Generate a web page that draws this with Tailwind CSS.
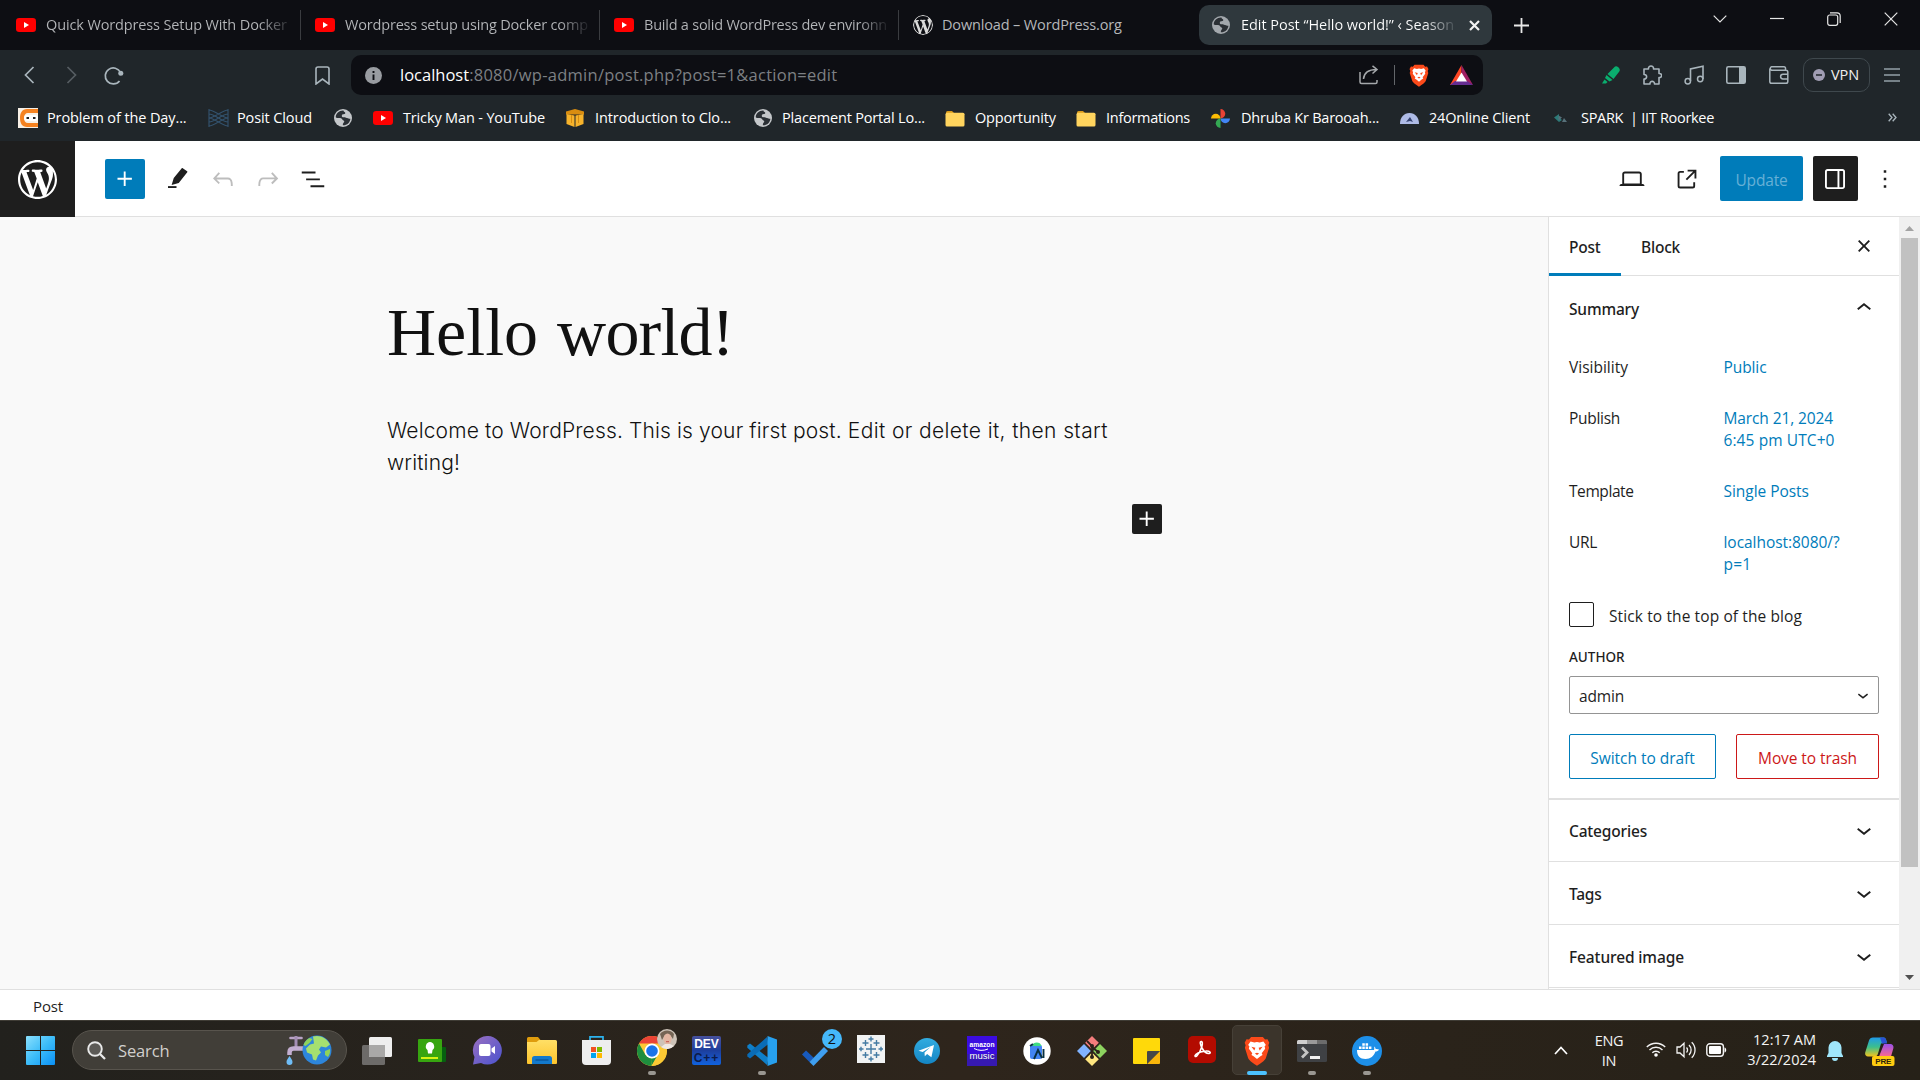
<!DOCTYPE html>
<html lang="en">
<head>
<meta charset="utf-8">
<title>Edit Post “Hello world!”</title>
<script src="https://cdn.jsdelivr.net/npm/@tailwindcss/browser@4"></script>
</head>
<body class="w-[1920px] h-[1080px] overflow-hidden bg-white font-['Open_Sans','Noto_Sans',sans-serif]">
<svg class="absolute h-0 w-0">
  <defs>
    <symbol id="yt" viewBox="0 0 20 14"><rect width="20" height="14" rx="3.2" fill="#f00"/><path d="M8 4v6l5-3z" fill="#fff"/></symbol>
    <symbol id="wp" viewBox="0 0 20 20"><path d="M20 10c0-5.51-4.49-10-10-10C4.48 0 0 4.49 0 10c0 5.52 4.48 10 10 10 5.51 0 10-4.48 10-10zM7.78 15.37L4.37 6.22c.55-.02 1.17-.08 1.17-.08.5-.06.44-1.13-.06-1.11 0 0-1.45.11-2.37.11-.18 0-.37 0-.58-.01C4.12 2.69 6.87 1.11 10 1.11c2.33 0 4.45.87 6.05 2.34-.68-.11-1.65.39-1.65 1.58 0 .74.45 1.36.9 2.1.35.61.55 1.36.55 2.46 0 1.49-1.4 5-1.4 5l-3.03-8.37c.54-.02.82-.17.82-.17.5-.05.44-1.25-.06-1.22 0 0-1.44.12-2.38.12-.87 0-2.33-.12-2.33-.12-.5-.03-.56 1.2-.06 1.22l.92.08 1.26 3.41zM17.41 10c.24-.64.74-1.87.43-4.25.7 1.29 1.05 2.71 1.05 4.25 0 3.29-1.73 6.24-4.4 7.78.97-2.59 1.94-5.2 2.92-7.78zM6.1 18.09C3.12 16.65 1.11 13.53 1.11 10c0-1.3.23-2.48.72-3.59C3.25 10.3 4.67 14.2 6.1 18.09zm4.03-6.63l2.58 6.98c-.86.29-1.76.45-2.71.45-.79 0-1.57-.11-2.29-.33.81-2.38 1.62-4.74 2.42-7.1z" fill="currentColor"/></symbol>
    <symbol id="globe" viewBox="0 0 18 18"><circle cx="9" cy="9" r="9" fill="currentColor"/><path d="M9.5 1.6C5 1.4 2 4.600 1.700 8.200c1.600 1.400 3.400.6 5.200 1 1.700.4 1.300 2 2.500 2.300 1 .3 1.100 1.100.3 2.100-.7.9-1 1.700-.8 2.700 4.200.100 7.200-3 7.500-6.600-1.300.5-2-.8-3.500-.7-1.200.1-1.700-.8-3-.7-1.500 0-2.300-.7-2.100-1.900.2-1.100 1.500-1.200 2.600-1.400 1.300-.2 1-1.600.2-2-.7-.4-1.200-.6-1.100-1.400z" fill="#2b3035"/></symbol>
    <symbol id="folder" viewBox="0 0 20 17"><path d="M1 2.500A1.500 1.500 0 0 1 2.500 1H7l2 2h9.500v5H1z" fill="#d99a1c"/><rect x=".5" y="2.800" width="19" height="13.700" rx="1.500" fill="#ffd45e"/></symbol>
    <symbol id="brave" viewBox="0 0 24 28"><path d="M6.500 1h11l2 2.300 2.300-.3 1.700 3.200-.9 2.400.7 2.400-3 9.500c-.7 2.400-6 5.700-8.300 7.300-2.300-1.600-7.600-4.900-8.300-7.300l-3-9.500.7-2.400L.5 6.200 2.200 3l2.300.3z" fill="#fb4a1a"/><path d="M12 5.500l2.500.5L18 5.200l2.300 3.300-1.200 1 .5 2.500-3.200 4 .8 1.800-2 1.200L12 21.500 8.800 19l-2-1.200.8-1.800-3.200-4 .5-2.500-1.200-1L6 5.200l3.500.8z" fill="#fff"/><path d="M6.800 10l3.700 1-1 2.600zM17.200 10l-3.700 1 1 2.600zM10 16.300l2 1.500 2-1.500-2-.7z" fill="#fb4a1a"/></symbol>
    <symbol id="down" viewBox="0 0 24 24"><path d="M17.500 11.600L12 16l-5.500-4.400.9-1.200L12 14l4.500-3.600 1 1.200z" fill="currentColor"/></symbol>
    <symbol id="plus" viewBox="0 0 24 24"><path d="M11 12.500V17.500H12.500V12.500H17.500V11H12.500V6H11V11H6V12.500H11Z" fill="currentColor"/></symbol>
    <linearGradient id="gwin" x1="0" y1="0" x2="1" y2="1"><stop stop-color="#8be0fd"/><stop offset=".5" stop-color="#3cbcf9"/><stop offset="1" stop-color="#0a90f5"/></linearGradient>
    <linearGradient id="gcop" x1="0" y1="0" x2="0" y2="1"><stop stop-color="#1f9bea"/><stop offset=".5" stop-color="#3cbf8c"/><stop offset="1" stop-color="#f4c51c"/></linearGradient>
    <linearGradient id="gcop2" x1="0" y1="0" x2="0" y2="1"><stop stop-color="#9a50e8"/><stop offset="1" stop-color="#fb6a8c"/></linearGradient>
    <linearGradient id="gchat" x1="0" y1="0" x2="1" y2="1"><stop stop-color="#9a6fc0"/><stop offset="1" stop-color="#4a53cf"/></linearGradient>
    <linearGradient id="gfold" x1="0" y1="0" x2="0" y2="1"><stop stop-color="#ffdf66"/><stop offset="1" stop-color="#fdc42c"/></linearGradient>
    <linearGradient id="gtel" x1="0" y1="0" x2="0" y2="1"><stop stop-color="#32ace0"/><stop offset="1" stop-color="#1485c4"/></linearGradient>
  </defs>
</svg>

<!-- tab strip -->
<div class="flex h-[50px] bg-[#0d0e13] text-[14.5px] leading-[50px] text-[#b5b7ba] whitespace-nowrap">
  <div class="flex w-[301px] shrink-0 items-center pl-4"><svg class="w-5 h-3.5 shrink-0"><use href="#yt"/></svg><span class="ml-2.5 w-[242px] overflow-hidden tracking-[-0.13px] bg-linear-to-r from-[#b5b7ba] from-88% to-[#303136] bg-clip-text text-transparent">Quick Wordpress Setup With Docker</span><i class="ml-auto w-px h-[30px] bg-[#3a3c40]"></i></div>
  <div class="flex w-[299px] shrink-0 items-center pl-3.5"><svg class="w-5 h-3.5 shrink-0"><use href="#yt"/></svg><span class="ml-2.5 w-[244px] overflow-hidden tracking-[-0.18px] bg-linear-to-r from-[#b5b7ba] from-88% to-[#1c1d22] bg-clip-text text-transparent">Wordpress setup using Docker comp</span><i class="ml-auto w-px h-[30px] bg-[#3a3c40]"></i></div>
  <div class="flex w-[299px] shrink-0 items-center pl-3.5"><svg class="w-5 h-3.5 shrink-0"><use href="#yt"/></svg><span class="ml-2.5 w-[244px] overflow-hidden tracking-[-0.23px] bg-linear-to-r from-[#b5b7ba] from-88% to-[#1c1d22] bg-clip-text text-transparent">Build a solid WordPress dev environn</span><i class="ml-auto w-px h-[30px] bg-[#3a3c40]"></i></div>
  <div class="flex w-[300px] shrink-0 items-center pl-3.5"><svg class="w-5 h-5 shrink-0 text-[#dadada] rounded-full"><use href="#wp"/></svg><span class="ml-[9px] tracking-[-0.15px]">Download – WordPress.org</span></div>
  <div class="mt-[5px] flex h-10 w-[293px] shrink-0 items-center rounded-[10px] bg-[#2f383d] pl-[13px] leading-10 text-white"><svg class="w-[18px] h-[18px] shrink-0 text-[#a3a8ad]"><use href="#globe"/></svg><span class="ml-[11px] w-[213px] overflow-hidden tracking-[-0.04px] bg-linear-to-r from-white from-86% to-[#4a5358] bg-clip-text text-transparent">Edit Post “Hello world!” ‹ Season</span><svg class="ml-[15px] w-[11px] h-[11px]" viewBox="0 0 11 11"><path d="M1 1l9 9M10 1l-9 9" stroke="#f2f2f2" stroke-width="2.200"/></svg></div>
  <svg class="ml-[22px] mt-[17.5px] w-[15px] h-[15px]" viewBox="0 0 15 15"><path d="M7.500 0v15M0 7.500h15" stroke="#e8e8e8" stroke-width="1.800"/></svg>
  <div class="ml-auto mr-[22px] flex h-[38px] items-center text-[#e6e6e6]">
    <svg class="w-3.5 h-2" viewBox="0 0 14 8"><path d="M.7.7L7 7 13.300.7" fill="none" stroke="currentColor" stroke-width="1.200"/></svg>
    <svg class="ml-[43px] w-3.5 h-2" viewBox="0 0 14 8"><path d="M0 3.500h14" stroke="currentColor" stroke-width="1.200"/></svg>
    <svg class="ml-[43px] w-3.5 h-3.5" viewBox="0 0 14 14"><rect x=".7" y="3" width="10" height="10.300" rx="2" fill="none" stroke="currentColor" stroke-width="1.200"/><path d="M3 .8h7A3.200 3.200 0 0 1 13.200 4v7" fill="none" stroke="currentColor" stroke-width="1.200"/></svg>
    <svg class="ml-[43px] w-3.5 h-3.5" viewBox="0 0 14 14"><path d="M.7.7l12.600 12.600M13.300.7L.7 13.300" stroke="currentColor" stroke-width="1.200"/></svg>
  </div>
</div>

<!-- address row -->
<div class="flex h-[50px] items-center bg-[#20262a] text-[#a9b5bc]">
  <svg class="ml-6 w-[11px] h-[18px]" viewBox="0 0 11 18"><path d="M9.500 1L1.500 9l8 8" fill="none" stroke="currentColor" stroke-width="1.700"/></svg>
  <svg class="ml-[31px] w-[11px] h-[18px]" viewBox="0 0 11 18"><path d="M1.500 1l8 8-8 8" fill="none" stroke="#565d62" stroke-width="1.700"/></svg>
  <svg class="ml-[27px] w-5 h-[19px]" viewBox="0 0 20 19"><path d="M16.500 6.500A8 8 0 1 0 15.500 15" fill="none" stroke="currentColor" stroke-width="1.700"/><circle cx="16.800" cy="7.300" r="2.500" fill="currentColor"/></svg>
  <svg class="ml-[191px] w-[15px] h-[19px]" viewBox="0 0 15 19"><path d="M3 1h9a2 2 0 0 1 2 2v15l-6.500-5L1 18V3a2 2 0 0 1 2-2z" fill="none" stroke="currentColor" stroke-width="1.600"/></svg>
  <div class="ml-[21px] flex h-10 w-[1132px] items-center rounded-[10px] bg-[#0d0e13] pl-3.5 text-[16.5px]">
    <svg class="w-[17px] h-[17px]" viewBox="0 0 17 17"><circle cx="8.500" cy="8.500" r="8.500" fill="#999ca1"/><path d="M8.500 7.500v5.500M8.500 4v2" stroke="#0d0e13" stroke-width="1.900"/></svg>
    <span class="ml-[18px] leading-5 tracking-[0.26px] text-[#7d8084]"><b class="font-normal tracking-normal text-white">localhost</b>:8080/wp-admin/post.php?post=1&amp;action=edit</span>
    <svg class="ml-auto w-5 h-5" viewBox="0 0 20 20"><path d="M1 7v10a1.500 1.500 0 0 0 1.500 1.500h14A1.500 1.500 0 0 0 18 17v-2M4.500 14c.5-6 4.500-9.500 13-9.500M13.500.8l4.500 3.700-4.500 4" fill="none" stroke="#a5a8ab" stroke-width="1.500"/></svg>
    <i class="ml-[15px] w-px h-5 bg-[#63666a]"></i>
    <svg class="ml-3.5 w-5 h-[23px]"><use href="#brave"/></svg>
    <svg class="ml-[21px] mr-2.5 w-[23px] h-5" viewBox="0 0 23 20"><path d="M11.500 0L0 20h5l6.500-11z" fill="#ff4724"/><path d="M11.500 0L23 20l-6-3-5.500-8z" fill="#9e1f63"/><path d="M0 20h23l-6-4H5z" fill="#662d91"/><path d="M11.500 7.500L17 16.500H6z" fill="#fff"/></svg>
  </div>
  <div class="ml-auto mr-5 flex items-center">
    <svg class="w-[19px] h-[18px]" viewBox="0 0 19 18"><path d="M12 1.500a3 3 0 0 1 4-.5l1 1a3 3 0 0 1 .3 3.500L11.500 13 5.500 8z" fill="#0aad6e"/><path d="M4.500 9l6 5-3 1.500-4.500-3.500z" fill="#0aad6e"/><path d="M2.500 13.500L5.500 16 4 17.500H0z" fill="#0aad6e"/></svg>
    <svg class="ml-[21px] w-5 h-5" viewBox="0 0 20 20"><path d="M2 4h4.500c-.6-4 5.600-4 5 0H17v4.500c4-.3 3 4.500 0 4V19h-4.500c.3-3.500-5-3.500-4.500 0H2v-5c3.500.2 3.500-4.700 0-4.500z" fill="none" stroke="currentColor" stroke-width="1.600" stroke-linejoin="round"/></svg>
    <svg class="ml-[22px] w-5 h-5" viewBox="0 0 20 20"><path d="M6.500 16V4L19 1.200V14" fill="none" stroke="currentColor" stroke-width="1.600"/><circle cx="3.800" cy="16.300" r="2.700" fill="none" stroke="currentColor" stroke-width="1.500"/><circle cx="16.200" cy="14" r="2.700" fill="none" stroke="currentColor" stroke-width="1.500"/></svg>
    <svg class="ml-[22px] w-5 h-[18px]" viewBox="0 0 20 18"><rect x=".8" y=".8" width="18.400" height="16.400" rx="1.500" fill="none" stroke="currentColor" stroke-width="1.600"/><path d="M13 1h6v16h-6z" fill="currentColor"/></svg>
    <svg class="ml-[23px] w-5 h-[18px]" viewBox="0 0 20 18"><path d="M16.500 4V2.500a1.500 1.500 0 0 0-1.500-1.700H2.500a1.800 1.800 0 0 0 0 3.400H17a1.800 1.800 0 0 1 1.800 1.800v9.400a1.800 1.800 0 0 1-1.800 1.800H2.600A1.800 1.800 0 0 1 .8 15.400V2.500M19 8.200h-5a2.400 2.400 0 0 0 0 4.800h5" fill="none" stroke="currentColor" stroke-width="1.500"/></svg>
    <div class="ml-3.5 flex h-[34px] w-[67px] items-center rounded-[10px] border border-[#3f484d] pl-[9px] text-[14.5px] text-[#f0f0f0]"><svg class="w-3 h-3 mr-[6px]" viewBox="0 0 12 12"><circle cx="6" cy="6" r="6" fill="#a19db3"/><path d="M3 6h6" stroke="#20262a" stroke-width="1.500"/></svg><span class="tracking-[-0.09px]">VPN</span></div>
    <svg class="ml-3.5 w-4 h-3.5" viewBox="0 0 16 14"><path d="M0 1h16M0 7h16M0 13h16" stroke="#93a0a8" stroke-width="1.400"/></svg>
  </div>
</div>

<!-- bookmarks -->
<div class="flex h-[41px] bg-[#20262a] text-[14.5px] leading-[34px] text-white whitespace-nowrap">
  <div class="ml-[18px] flex h-9 w-[190px] items-center"><svg class="w-5 h-5 mr-[9px] shrink-0" viewBox="0 0 20 20"><path d="M0 0h20v20H0z" fill="#f7f0e6"/><path d="M20 1H9C4 1 2 5 2 10s2 9 7 9h11v-4H10c-2.500 0-4-2-4-5s1.500-5 4-5h10z" fill="#f58220"/><rect x="6" y="7" width="14" height="6" rx="3" fill="#fff"/><path d="M8.500 10h2.500M15 10h2.500" stroke="#222" stroke-width="1.800"/></svg><span class="tracking-[-0.11px]">Problem of the Day...</span></div>
  <div class="flex h-9 w-[126px] items-center"><svg class="w-[21px] h-[18px] mr-2 shrink-0" viewBox="0 0 21 18"><path d="M1 0v18M20 0v18M1 1c5 0 14 8 19 8M1 9c5 0 14 8 19 8M20 1C15 1 6 9 1 9M20 9C15 9 6 17 1 17M1 5c6 0 13 8 19 8M20 5C14 5 7 13 1 13" fill="none" stroke="#33536f" stroke-width="1.100"/></svg><span class="tracking-[-0.11px]">Posit Cloud</span></div>
  <div class="flex h-9 w-[39px] items-center"><svg class="w-[18px] h-[18px] text-[#c4c7ca]"><use href="#globe"/></svg></div>
  <div class="flex h-9 w-[193px] items-center"><svg class="w-5 h-3.5 mr-2.5 shrink-0"><use href="#yt"/></svg><span class="tracking-[-0.15px]">Tricky Man - YouTube</span></div>
  <div class="flex h-9 w-[188px] items-center"><svg class="w-[18px] h-[18px] mr-[11px] shrink-0" viewBox="0 0 18 18"><path d="M9 0l9 2.500v3H0v-3z" fill="#d98d10"/><path d="M.5 5l8 1.500V18l-8-3zM17.500 5l-8 1.500V18l8-3z" fill="#f7b32b"/><path d="M5.500 6v8M12.500 6v8" stroke="#d98d10"/></svg><span class="tracking-[-0.1px]">Introduction to Clo...</span></div>
  <div class="flex h-9 w-[191px] items-center"><svg class="w-[18px] h-[18px] mr-[10px] shrink-0 text-[#c4c7ca]"><use href="#globe"/></svg><span class="tracking-[-0.17px]">Placement Portal Lo...</span></div>
  <div class="flex h-9 w-[131px] items-center"><svg class="w-5 h-[17px] mr-2.5 shrink-0"><use href="#folder"/></svg><span class="tracking-[-0.16px]">Opportunity</span></div>
  <div class="flex h-9 w-[135px] items-center"><svg class="w-5 h-[17px] mr-2.5 shrink-0"><use href="#folder"/></svg><span class="tracking-[-0.28px]">Informations</span></div>
  <div class="flex h-9 w-[189px] items-center"><svg class="w-[19px] h-[19px] mr-[11px] shrink-0" viewBox="0 0 20 20"><path d="M10 0a5 5 0 0 1 0 10z" fill="#ea4335"/><path d="M20 10a5 5 0 0 1-10 0z" fill="#4285f4"/><path d="M10 20a5 5 0 0 1 0-10z" fill="#34a853"/><path d="M0 10a5 5 0 0 1 10 0z" fill="#fbbc04"/></svg><span class="tracking-[-0.23px]">Dhruba Kr Barooah...</span></div>
  <div class="flex h-9 w-[154px] items-center"><svg class="w-[19px] h-[11px] mr-2.5 shrink-0" viewBox="0 0 19 11"><path d="M0 11C0 4 4 0 9.500 0S19 4 19 11z" fill="#aebbe6"/><path d="M6 9l4-5 1.500 2.500L13 9l-3-1z" fill="#33406e"/></svg><span class="tracking-[-0.17px]">24Online Client</span></div>
  <div class="flex h-9 w-40 items-center"><svg class="w-[13px] h-2.5 mr-3.5 shrink-0" viewBox="0 0 13 10"><path d="M5 1L0 4.500 5 9l3-2-3-2.500z" fill="#2c7a78"/><path d="M4.500 2.500l3.500 2-3.500 3M8 9l2-4 3 4z" fill="#57707a"/></svg><span class="tracking-[-0.3px]">SPARK&nbsp; | IIT Roorkee</span></div>
  <svg class="ml-auto mr-[23px] mt-[13px] w-[9px] h-[9px]" viewBox="0 0 9 9"><path d="M.7.7L4 4.500.7 8.300M4.700.7L8 4.500 4.700 8.300" fill="none" stroke="#a9b5bc" stroke-width="1.300"/></svg>
</div>

<!-- editor header -->
<header class="flex h-[76px] items-center border-b border-[#e0e0e0] bg-white text-[#1e1e1e]">
  <div class="-mb-px flex h-[76px] w-[75px] items-center justify-center bg-[#1e1e1e]"><svg class="w-[39px] h-[39px] text-white"><use href="#wp"/></svg></div>
  <div class="ml-[30px] flex h-10 w-10 items-center justify-center rounded-[2px] bg-[#007cba] text-white"><svg class="w-[30px] h-[30px]"><use href="#plus"/></svg></div>
  <svg class="ml-[18px] w-[30px] h-[30px]" viewBox="0 0 24 24"><path d="M15.800 3.300l3.500 2.400c.3.200.3.500.1.800l-6.800 8.600-5.700 1.700 1.700-5.600 6.400-7.800c.2-.3.500-.3.800-.1z" fill="currentColor"/><path d="M4 17.700h6.800v1.500H4z" fill="currentColor"/></svg>
  <svg class="ml-[15px] w-[30px] h-[30px] text-[#bdbdbd]" viewBox="0 0 24 24"><path d="M18.300 11.700c-.6-.6-1.400-.9-2.300-.9H6.700l2.900-3.300-1.100-1-4.500 5L8.500 16l1-1-2.700-2.700H16c.5 0 .9.2 1.300.5 1 1 1 3.400 1 4.500v.3h1.500v-.2c0-1.500 0-4.300-1.500-5.700z" fill="currentColor"/></svg>
  <svg class="ml-[15px] w-[30px] h-[30px] text-[#bdbdbd]" viewBox="0 0 24 24"><path d="M15.600 6.500l-1.100 1 2.900 3.300H8c-.9 0-1.700.3-2.300.9-1.400 1.500-1.400 4.200-1.400 5.600v.2h1.500v-.3c0-1.100 0-3.500 1-4.500.3-.3.700-.5 1.300-.5h9.200L14.500 15l1.100 1.100 4.600-4.600-4.600-5z" fill="currentColor"/></svg>
  <svg class="ml-[15px] w-[30px] h-[30px]" viewBox="0 0 24 24"><path d="M3 6h11v1.500H3V6Zm3.500 5.500h11V13h-11v-1.500ZM21 17H10v1.500h11V17Z" fill="currentColor"/></svg>
  <div class="ml-auto mr-5 flex items-center">
    <svg class="w-[30px] h-[30px]" viewBox="0 0 24 24"><path d="M20.500 16h-.7V8c0-1.100-.9-2-2-2H6.200c-1.100 0-2 .9-2 2v8h-.7c-.8 0-1.500.7-1.500 1.500h20c0-.8-.7-1.500-1.500-1.500zM5.700 8c0-.3.2-.5.5-.5h11.600c.3 0 .5.2.5.500v7.600H5.700V8z" fill="currentColor"/></svg>
    <svg class="ml-[25px] w-[30px] h-[30px]" viewBox="0 0 24 24"><path d="M19.500 4.500h-7V6h4.440l-5.970 5.970 1.060 1.060L18 7.060v4.440h1.500v-7Zm-13 1a2 2 0 0 0-2 2v10a2 2 0 0 0 2 2h10a2 2 0 0 0 2-2v-3H17v3a.5.5 0 0 1-.5.5h-10a.5.5 0 0 1-.5-.5v-10a.5.5 0 0 1 .5-.5h3V5.500h-3Z" fill="currentColor"/></svg>
    <div class="ml-[18px] flex h-[45px] w-[83px] items-center justify-center rounded-[2px] bg-[#007cba] pt-1 text-[15.5px] tracking-[-0.18px] text-[#66b0d6]">Update</div>
    <div class="ml-2.5 flex h-[45px] w-[45px] items-center justify-center rounded-[2px] bg-[#1e1e1e] text-white"><svg class="-ml-px w-[30px] h-[30px]" viewBox="0 0 24 24"><path d="M18 4H6c-1.100 0-2 .9-2 2v12c0 1.100.9 2 2 2h12c1.100 0 2-.9 2-2V6c0-1.100-.9-2-2-2zm-4 14.500H6c-.3 0-.5-.2-.5-.5V6c0-.3.2-.5.5-.5h8v13zm4.500-.5c0 .3-.2.5-.5.5h-2.500v-13H18c.3 0 .5.2.5.500v12z" fill="currentColor"/></svg></div>
    <svg class="ml-3 w-[30px] h-[30px]" viewBox="0 0 24 24"><path d="M13 19h-2v-2h2v2zm0-6h-2v-2h2v2zm0-6h-2V5h2v2z" fill="currentColor"/></svg>
  </div>
</header>

<!-- canvas and settings sidebar -->
<main class="flex h-[772px]">
  <section class="flex w-[1548px] flex-col bg-[#f9f9f9] pl-[387px] text-[#111]">
    <h1 class="mt-[74px] h-[82px] font-['Liberation_Serif',serif] text-[68px] leading-[82px] whitespace-nowrap"><span class="mr-0.5">Hello</span> <span class="tracking-[-0.8px]">world!</span></h1>
    <p class="mt-[42px] w-[775px] font-['Inter',sans-serif] text-[21px] font-light leading-8 tracking-[0.14px]">Welcome to WordPress. This is your first post. <span class="tracking-[0.38px]">Edit or delete it, then start</span><br>writing!</p>
    <div class="mt-[25px] flex h-[30px] w-[775px] justify-end"><span class="flex h-[30px] w-[30px] items-center justify-center rounded-[2px] bg-[#1e1e1e] text-white"><svg class="w-[30px] h-[30px]"><use href="#plus"/></svg></span></div>
  </section>
  <aside class="h-[772px] w-[351px] overflow-hidden border-l border-[#e0e0e0] bg-white text-[15.5px] leading-[22px] text-[#1e1e1e]">
    <div class="flex h-[59px] items-center border-b border-[#e0e0e0] font-['Noto_Sans'] font-medium">
      <div class="-mb-px flex h-[59px] w-[72px] items-center border-b-3 border-[#007cba] pl-5 pt-[4px] tracking-[-0.2px]">Post</div>
      <div class="pl-5 pt-0.5 tracking-[-0.2px]">Block</div>
      <svg class="ml-auto mr-5 w-[30px] h-[30px]" viewBox="0 0 24 24"><path d="M12 13.060l3.712 3.713 1.061-1.060L13.061 12l3.712-3.712-1.060-1.060L12 10.938 8.288 7.227l-1.061 1.060L10.939 12l-3.712 3.712 1.060 1.061L12 13.061z" fill="currentColor"/></svg>
    </div>
    <div class="h-[524px] border-b-2 border-[#e0e0e0] px-5">
      <div class="flex h-[63px] items-center justify-between font-['Noto_Sans'] font-medium tracking-[-0.17px]"><span class="mt-0.5">Summary</span><svg class="w-[30px] h-[30px]" viewBox="0 0 24 24"><path d="M6.500 12.400L12 8l5.500 4.400-.9 1.200L12 10l-4.500 3.600-1-1.200z" fill="currentColor"/></svg></div>
      <div class="mt-[17px] grid grid-cols-[154.500px_1fr] gap-y-[29px]">
        <span>Visibility</span><span class="tracking-[-0.09px] text-[#007cba]">Public</span>
        <span class="tracking-[-0.29px]">Publish</span><span class="tracking-[-0.11px] text-[#007cba]">March 21, 2024<br><span class="tracking-[0.09px]">6:45 pm UTC+0</span></span>
        <span class="tracking-[-0.42px]">Template</span><span class="tracking-[-0.04px] text-[#007cba]">Single Posts</span>
        <span class="tracking-[-0.32px]">URL</span><span class="tracking-[-0.05px] text-[#007cba]">localhost:8080/?<br><span class="tracking-[0.26px]">p=1</span></span>
      </div>
      <div class="mt-[27px] flex h-[25px] items-center"><i class="h-[25px] w-[25px] rounded-[2px] border border-[#1e1e1e]"></i><span class="ml-[15px] mt-0.5 tracking-[0.11px]">Stick to the top of the blog</span></div>
      <div class="mt-[19px] h-[22px] font-['Noto_Sans'] text-[13.5px] font-medium">AUTHOR</div>
      <div class="mt-2 flex h-[38px] items-center justify-between rounded-[2px] border border-[#949494] pl-[9px] pr-[4px]"><span class="mt-0.5 tracking-[-0.17px]">admin</span><svg class="w-[22px] h-[22px]"><use href="#down"/></svg></div>
      <div class="mt-5 flex justify-between">
        <div class="flex h-[45px] w-[147px] items-center justify-center rounded-[2px] border border-[#007cba] pt-0.5 tracking-[-0.03px] text-[#007cba]">Switch to draft</div>
        <div class="flex h-[45px] w-[143px] items-center justify-center rounded-[2px] border border-[#cc1818] pt-0.5 tracking-[-0.08px] text-[#cc1818]">Move to trash</div>
      </div>
    </div>
    <div class="flex h-[62px] items-center justify-between border-b border-[#e0e0e0] px-5 font-['Noto_Sans'] font-medium tracking-[-0.18px]">Categories<svg class="-mt-px w-[30px] h-[30px]"><use href="#down"/></svg></div>
    <div class="flex h-[63px] items-center justify-between border-b border-[#e0e0e0] px-5 font-['Noto_Sans'] font-medium tracking-[-0.25px]"><span class="mt-0.5">Tags</span><svg class="w-[30px] h-[30px]"><use href="#down"/></svg></div>
    <div class="flex h-[63px] items-center justify-between border-b border-[#e0e0e0] px-5 font-['Noto_Sans'] font-medium tracking-[-0.12px]"><span class="mt-0.5">Featured image</span><svg class="w-[30px] h-[30px]"><use href="#down"/></svg></div>
  </aside>
  <div class="flex w-[21px] flex-col items-center bg-[#f0f0f0]">
    <svg class="mt-[9px] w-[9px] h-[5px]" viewBox="0 0 9 5"><path d="M4.500 0L9 5H0z" fill="#a3a3a3"/></svg>
    <i class="mt-[7px] h-[629px] w-[17px] bg-[#c1c1c1]"></i>
    <svg class="mt-auto mb-[9px] w-[9px] h-[5px]" viewBox="0 0 9 5"><path d="M4.500 5L9 0H0z" fill="#505050"/></svg>
  </div>
</main>
<footer class="flex h-[31px] items-center border-t border-[#e0e0e0] bg-white pl-[33px] pt-0.5 text-[15px] tracking-[-0.14px] text-[#1e1e1e]">Post</footer>

<!-- taskbar -->
<div class="flex h-[60px] border-t border-[#3f3c35] bg-linear-to-r from-[#22211d] via-[#2e251c] to-[#262118] text-[#f3f3f3]">
  <svg class="ml-[26px] mt-[15px] w-[29px] h-[29px] shrink-0" viewBox="0 0 29 29"><path d="M0 1a1 1 0 0 1 1-1h13v14H0zM15 0h13a1 1 0 0 1 1 1v13H15zM0 15h14v14H1a1 1 0 0 1-1-1zM15 15h14v13a1 1 0 0 1-1 1H15z" fill="url(#gwin)"/></svg>
  <div class="ml-[17px] mt-[9px] flex h-10 w-[275px] shrink-0 items-center rounded-full border border-[#58544d] bg-[#413e38] pl-3.5">
    <svg class="w-[19px] h-[19px]" viewBox="0 0 19 19"><circle cx="8" cy="8" r="6.800" fill="#5c5a56" stroke="#e9e9e9" stroke-width="1.900"/><path d="M13 13l5 5" stroke="#e9e9e9" stroke-width="2.300"/></svg>
    <span class="ml-3 mt-0.5 text-[16.5px] tracking-[-0.12px] text-[#d2d0cd]">Search</span>
    <svg class="ml-auto mr-3.5 w-[46px] h-[30px]" viewBox="0 0 46 30"><path d="M4.500 3h11" stroke="#b9a3c6" stroke-width="2.600" stroke-linecap="round"/><path d="M10 1v13" stroke="#a58fb4" stroke-width="3"/><path d="M3.500 20v-2.500c0-3 1.500-4 4-4H19" fill="none" stroke="#c3aed0" stroke-width="4.500"/><path d="M3.500 21c1.500 2.500 3 4 3 6a3 3 0 0 1-6 0c0-2 1.500-3.500 3-6z" fill="#6fbdf6"/><circle cx="31" cy="15" r="14.500" fill="#2d86dc"/><path d="M27 1.500c6-2 14 1 17 8l-4 3-5-1-2 3 2 3-3 3-2 5-3-1-1-5-5-2-1-4 4-4 4-1z" fill="#a5e070"/><path d="M17.500 10c1-3 3-5.500 6-7l3 1-3 4-4 3zM39 16l5-2c.5 3-.5 6-2 8l-3-2z" fill="#8fd35a"/></svg>
  </div>
  <div class="ml-[2px] flex shrink-0">
    <div class="relative flex w-[55px] items-center justify-center"><svg class="w-[30px] h-[28px]" viewBox="0 0 30 28"><rect y="8" width="23" height="20" rx="1.500" fill="#6d6b69"/><rect x="7" width="23" height="20" rx="1.500" fill="#eee"/><path d="M7 8h16v12H8.500A1.500 1.500 0 0 1 7 18.500z" fill="#a9a8a7"/></svg></div>
    <div class="relative flex w-[55px] items-center justify-center"><svg class="w-[28px] h-[23px]" viewBox="0 0 28 23"><rect x="20" y="8" width="8" height="15" rx="1" fill="#06600f"/><rect width="24" height="23" rx="1" fill="#37a510"/><path d="M12 3a4.500 4.500 0 0 1 2.500 8l-.5 3.500h-4L9.500 11A4.500 4.500 0 0 1 12 3z" fill="#fff"/><path d="M3 19h17" stroke="#d4f312" stroke-width="2"/></svg></div>
    <div class="relative flex w-[55px] items-center justify-center"><svg class="w-[30px] h-[29px]" viewBox="0 0 30 29"><path d="M15 0a14.300 14.300 0 1 1-6 27L1 28.500 2.500 21A14.300 14.300 0 0 1 15 0z" fill="url(#gchat)"/><rect x="7" y="8" width="11.500" height="12" rx="2" fill="#fff"/><path d="M19.500 12.500l3.500-2.500v8l-3.500-2.500z" fill="#fff"/></svg></div>
    <div class="relative flex w-[55px] items-center justify-center"><svg class="w-[30px] h-[27px]" viewBox="0 0 30 27"><path d="M0 1.500A1.500 1.500 0 0 1 1.500 0H11l2.500 3H28v6H0z" fill="#df9c0d"/><path d="M0 5h9.500L12 3h16.500A1.500 1.500 0 0 1 30 4.500V26a1 1 0 0 1-1 1H1a1 1 0 0 1-1-1z" fill="url(#gfold)"/><path d="M5 27v-5.500A2.500 2.500 0 0 1 7.500 19h15a2.500 2.500 0 0 1 2.500 2.500V27z" fill="#1379cc"/><path d="M8.500 23h13" stroke="#0a4f94" stroke-width="1.200"/></svg></div>
    <div class="relative flex w-[55px] items-center justify-center"><svg class="w-[29px] h-[29px]" viewBox="0 0 29 29"><path d="M8 6V.8h13V6" fill="none" stroke="#2cb3ee" stroke-width="1.700"/><path d="M0 4h29v21a4 4 0 0 1-4 4H4a4 4 0 0 1-4-4z" fill="#eee"/><path d="M9 11h5v5H9z" fill="#f25022"/><path d="M15 11h5v5h-5z" fill="#7fba00"/><path d="M9 17h5v5H9z" fill="#00a4ef"/><path d="M15 17h5v5h-5z" fill="#ffb900"/></svg></div>
    <div class="relative flex w-[55px] items-center justify-center"><svg class="w-[30px] h-[30px]" viewBox="0 0 30 30"><circle cx="15" cy="15" r="15" fill="#fcc934"/><path d="M2 7.500A15 15 0 0 1 28 7.500H15z" fill="#ea4335"/><path d="M2 7.500L8.500 19 15 22.500 14.500 30A15 15 0 0 1 2 7.500z" fill="#1e8e3e"/><path d="M14.500 30l7-12.500L15 15 8.500 19 15 22z" fill="#1e8e3e"/><path d="M14.500 30l7-11.500L22 9h6.500A15 15 0 0 1 14.500 30z" fill="#fcc934"/><circle cx="15" cy="15" r="7.500" fill="#fff"/><circle cx="15" cy="15" r="5.800" fill="#1a73e8"/></svg>
      <svg class="absolute left-[33px] top-2 w-5 h-5" viewBox="0 0 20 20"><circle cx="10" cy="10" r="10" fill="#cdc3b8"/><path d="M3 5c3-4 10-5 14 0l-1 5-3-4H8l-3 5z" fill="#756555"/><ellipse cx="10.500" cy="10" rx="4" ry="5.500" fill="#e3b6a2"/><path d="M4 18l4-3h5l4 2a10 10 0 0 1-13 1z" fill="#efe9e4"/><path d="M9 12.700h3" stroke="#c6504a"/></svg>
      <i class="absolute bottom-[5px] left-6 h-1 w-2 rounded-full bg-[#9a9791]"></i></div>
    <div class="relative flex w-[55px] items-center justify-center"><div class="flex h-[29px] w-[29px] flex-col items-center rounded-[2px] bg-linear-to-b from-[#46509c] via-[#1c3f9e] to-[#0e63df] pt-px font-['Liberation_Sans'] text-[12px] font-bold leading-[14px]"><span class="text-white">DEV</span><span class="tracking-[1px] text-[#0b1b4a]">C++</span></div></div>
    <div class="relative flex w-[55px] items-center justify-center"><svg class="w-[30px] h-[30px]" viewBox="0 0 30 30"><path d="M21.500 22L3 7.500.3 9.500v2.200L20 29z" fill="#0f7fc9"/><path d="M21.500 8L3 22.500.3 20.500v-2.200L20 1z" fill="#0a6cb6"/><path d="M20.500 0L30 3.500v23L20.500 30z" fill="#27a0ee"/></svg><i class="absolute bottom-[5px] left-6 h-1 w-2 rounded-full bg-[#9a9791]"></i></div>
    <div class="relative flex w-[55px] items-center justify-center"><svg class="mt-2 -ml-1 w-[26px] h-[22px]" viewBox="0 0 26 22"><path d="M0 10.500l4-4 8 7.500-4.500 4z" fill="#185abd"/><path d="M7.500 18L22 3l4 4-14.500 15z" fill="#3f9ff0"/></svg>
      <span class="absolute left-[33px] top-2 flex h-5 w-5 items-center justify-center rounded-full bg-[#45b8fb] text-[14.5px] leading-none text-[#111]">2</span></div>
    <div class="relative flex w-[55px] items-center justify-center"><svg class="-mt-1 -ml-px w-[28px] h-[28px]" viewBox="0 0 28 28"><path d="M0 0h28v28H0z" fill="#f1f3f4"/><path d="M14 9v10M9 14h10M14 1.500v5M11.500 4h5M14 21.500v5M11.500 24h5M2 14h4.500M4 11.800v4.400M21.500 14H26M24 11.800v4.400M8.500 5v6M5.500 8h6M19.500 5v6M16.500 8h6M8.500 17v6M5.500 20h6M19.500 17v6M16.500 20h6" stroke="#447ba3" stroke-width="1.400"/></svg></div>
    <div class="relative flex w-[55px] items-center justify-center"><svg class="w-[26px] h-[26px]" viewBox="0 0 26 26"><circle cx="13" cy="13" r="13" fill="url(#gtel)"/><path d="M4.500 12.800L20 7l-2.600 12.300-4.300-3.200-2.300 2.200-.3-3.700 6-5.600-7.800 5z" fill="#fff"/></svg></div>
    <div class="relative flex w-[55px] items-center justify-center"><svg class="w-[30px] h-[30px] overflow-visible" viewBox="0 0 30 30"><path d="M0 0h30v30H0z" fill="#3b0ce0"/><path d="M0 18h30v12H0z" fill="#35209c" opacity=".7"/><text x="15" y="11" font-family="Liberation Sans" font-weight="700" font-size="7.500" fill="#fff" text-anchor="middle" textLength="25" lengthAdjust="spacingAndGlyphs">amazon</text><path d="M7 12.500q7 3.500 14 .5" fill="none" stroke="#fff"/><text x="15" y="22.500" font-family="Liberation Sans" font-size="9.500" fill="#fff" text-anchor="middle" textLength="25" lengthAdjust="spacingAndGlyphs">music</text></svg></div>
    <div class="relative flex w-[55px] items-center justify-center"><svg class="w-[28px] h-[28px]" viewBox="0 0 28 28"><circle cx="14" cy="14" r="13.700" fill="#fff"/><rect x="7" y="8" width="12" height="14" rx="2" fill="#4285f4"/><path d="M9 9a5 5 0 0 1 9.500 0z" fill="#3ddc84"/><path d="M11 22l4-9 4 8M20.500 12v9" fill="none" stroke="#083042" stroke-width="1.900"/><path d="M7 9l3-2" stroke="#083042" stroke-width="2"/></svg></div>
    <div class="relative flex w-[55px] items-center justify-center"><svg class="w-[30px] h-[30px]" viewBox="0 0 30 30"><path d="M15 0l6.800 6.800L15 13.500 8.200 6.800z" fill="#f47d7d"/><path d="M7 8l6.800 7L7 22 0 15z" fill="#80b3ff"/><path d="M23 8l7 7-7 7-6.800-7z" fill="#8dd35f"/><path d="M15 16.500l6.800 6.700L15 30l-6.800-6.800z" fill="#ffe680"/><path d="M10 5l5 5v12M15 11l6 5" fill="none" stroke="#2c221b" stroke-width="1.800"/><circle cx="15" cy="10" r="2" fill="#2c221b"/><circle cx="15" cy="21" r="2" fill="#2c221b"/><circle cx="21" cy="16" r="2" fill="#2c221b"/></svg></div>
    <div class="relative flex w-[55px] items-center justify-center"><svg class="w-[27px] h-[26px]" viewBox="0 0 27 26"><path d="M1 0h25a1 1 0 0 1 1 1v12L14 26H1a1 1 0 0 1-1-1V1a1 1 0 0 1 1-1z" fill="#ffd90a"/><path d="M27 13v12a1 1 0 0 1-1 1H14z" fill="#f9b50b"/><path d="M27 13H15a1 1 0 0 0-1 1v12z" fill="#474747"/></svg></div>
    <div class="relative flex w-[55px] items-center justify-center"><svg class="-mt-[3px] w-[28px] h-[27px]" viewBox="0 0 28 27"><rect width="28" height="27" rx="5" fill="#b30b00"/><path d="M13.500 5.500c-2-.5-1.300 3.500.8 7 1.500 2.800 4 5.200 6.700 5 2.500-.3 1-2.800-3-2.500-4 .2-8 1.800-10 3.300-2 1.700-.8 3.200 1 1.400 1.800-1.800 3.800-5.700 4.800-9 .7-2.500.6-4.800-.3-5.200z" fill="none" stroke="#fff" stroke-width="1.600"/></svg></div>
    <div class="relative flex w-[55px] items-center justify-center"><i class="absolute left-[3px] top-1 h-[50px] w-[50px] rounded-[5px] border border-[#464037] bg-[#3b342b]"></i><svg class="relative w-[26px] h-[30px]"><use href="#brave"/></svg><i class="absolute bottom-[5px] left-[18px] h-1 w-5 rounded-full bg-[#4cc2ff]"></i></div>
    <div class="relative flex w-[55px] items-center justify-center"><svg class="w-[30px] h-[22px]" viewBox="0 0 30 22"><rect width="30" height="22" rx="1.500" fill="#3f4144"/><path d="M0 4V1.500A1.500 1.500 0 0 1 1.500 0H10v4z" fill="#cfcfcf"/><path d="M10 0h10v4H10z" fill="#9a9a9a"/><path d="M20 0h8.500A1.500 1.500 0 0 1 30 1.500V4H20z" fill="#6c6c6c"/><path d="M5 7.500l5 5-5 5" fill="none" stroke="#c5c5c5" stroke-width="2.800"/><path d="M13 17.500h10" stroke="#f1f1f1" stroke-width="3"/></svg><i class="absolute bottom-[5px] left-6 h-1 w-2 rounded-full bg-[#9a9791]"></i></div>
    <div class="relative flex w-[55px] items-center justify-center"><svg class="w-[30px] h-[30px]" viewBox="0 0 30 30"><circle cx="15" cy="15" r="15" fill="#1d8fe8"/><path d="M5 14h17c.5-1.500.3-2.500 0-3.500 1 .5 1.500 1.500 1.700 2.500 1-.2 2.300 0 3.300.5-.7 1.500-2 2-3.500 2C22 20 18.500 23 13.500 23 8 23 5 20 5 14z" fill="#fff"/><path d="M7 10.500h2.500V13H7zM10.300 10.500h2.500V13h-2.500zM13.600 10.500h2.500V13h-2.500zM16.900 10.500h2.500V13h-2.500zM10.300 7.300h2.500v2.500h-2.500zM13.600 7.300h2.500v2.500h-2.500z" fill="#fff"/></svg><i class="absolute bottom-[5px] left-6 h-1 w-2 rounded-full bg-[#9a9791]"></i></div>
  </div>
  <div class="ml-auto mr-[25px] flex shrink-0 items-start text-[14.5px] leading-5">
    <svg class="mt-[25px] w-3.5 h-[9px]" viewBox="0 0 14 9"><path d="M1 8l6-6.500L13 8" fill="none" stroke="#fff" stroke-width="1.700"/></svg>
    <div class="ml-[26px] mt-2.5 w-[30px] text-center"><span class="tracking-[-0.34px]">ENG</span><br><span class="tracking-[-0.2px]">IN</span></div>
    <svg class="ml-[22px] mt-[20px] w-5 h-4" viewBox="0 0 20 16"><path d="M.8 6a13 13 0 0 1 18.400 0M3.500 9a9.200 9.200 0 0 1 13 0M6.300 11.800a5.200 5.200 0 0 1 7.400 0" fill="none" stroke="#f3f3f3" stroke-width="1.400"/><circle cx="10" cy="14" r="1.800" fill="#fff"/></svg>
    <svg class="ml-2.5 mt-[20px] w-5 h-[18px]" viewBox="0 0 20 18"><path d="M1 6h3l4-3.700v13.400L4 12H1z" fill="none" stroke="#f3f3f3" stroke-width="1.300"/><path d="M10.500 6.500a3.500 3.500 0 0 1 0 5M13 4a7 7 0 0 1 0 10M15.700 1.300a10.600 10.600 0 0 1 0 15.400" fill="none" stroke="#f3f3f3" stroke-width="1.300"/></svg>
    <svg class="ml-2.5 mt-[22px] w-[21px] h-3.5" viewBox="0 0 21 14"><rect x=".8" y=".8" width="16.600" height="12.400" rx="3" fill="none" stroke="#f3f3f3" stroke-width="1.400"/><rect x="3" y="3" width="12" height="8" rx="1" fill="#fff"/><path d="M18.500 4.500c2.300.5 2.300 4.500 0 5z" fill="#fff"/></svg>
    <div class="ml-[19px] mt-[9px] w-[70px] text-right">12:17 AM<br>3/22/2024</div>
    <svg class="ml-[11px] mt-5 w-4 h-5" viewBox="0 0 16 20"><path d="M8 0a6.500 6.500 0 0 1 6.500 6.500V12L16 15v1H0v-1l1.500-3V6.500A6.500 6.500 0 0 1 8 0zM5 17h6a3 3 0 0 1-6 0z" fill="#a0e6fb"/></svg>
    <svg class="ml-[22px] mt-[15px] w-[30px] h-[30px]" viewBox="0 0 30 30"><path d="M8 1.500h10c3 0 3 2 4 5l-6 1-3 10c-.5 2-1.500 3-3.500 3H3c-2.500 0-3.500-2-2.500-5L4 4.500c.6-2 2-3 4-3z" fill="url(#gcop)"/><path d="M15 1.500h3c3 0 3 2 4 6h-5z" fill="#2a52d4"/><path d="M19 8h6c2.500 0 4 2 3.300 4.500L26 20.500H14z" fill="url(#gcop2)"/><rect x="7" y="20" width="22.500" height="10" rx="2" fill="#ffcc10"/><text x="18.300" y="28" font-family="Liberation Sans" font-weight="700" font-size="8" fill="#2c2408" text-anchor="middle" textLength="16">PRE</text></svg>
  </div>
</div>
</body>
</html>
